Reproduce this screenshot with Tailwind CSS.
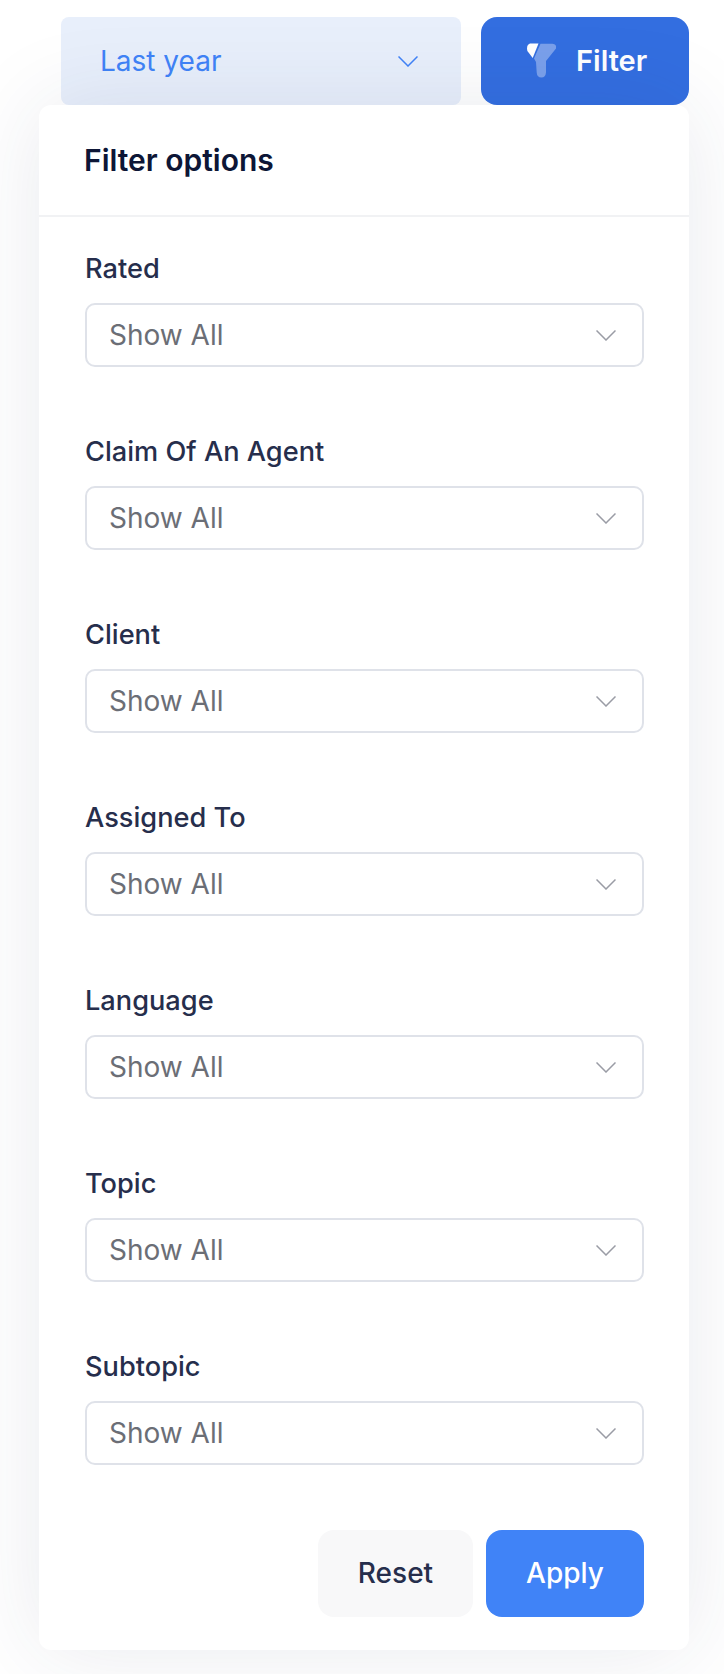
<!DOCTYPE html>
<html lang="en">
<head>
  <meta charset="UTF-8">
  <title>Filter options</title>
  <script src="https://cdn.jsdelivr.net/npm/@tailwindcss/browser@4"></script>
</head>
<body class="bg-white font-['Inter',sans-serif] h-[1674px] overflow-hidden">

  <!-- Top bar -->
  <div class="flex gap-5 pt-[17px] pl-[61px]">
    <div class="w-[400px] h-[88px] rounded-lg bg-[#e8effb] flex items-center justify-between pl-[39px] pr-[43px] text-[#4083f7] text-[28px]">
      <span>Last year</span>
      <svg width="20" height="11" viewBox="0 0 20 11" fill="none" stroke="#4083f7" stroke-width="1.5"><path d="M0.5 0.5 10 10 19.5 0.5"/></svg>
    </div>
    <button class="w-[208px] h-[88px] rounded-2xl bg-[#336ee0] flex items-center pl-[46px] gap-[19px] text-white text-[29px] font-semibold">
      <svg width="30" height="36" viewBox="0 0 30 36">
        <path d="M3 0.5 11.5 0.5 5.7 15 0.4 8Q-1 2 3 0.5Z" fill="#fff"/>
        <path d="M13.5 0.7 25.5 0.7Q29.8 1 29 5.5L19 18 19 29.5Q18.5 34.5 14.5 34.5 10 34.5 9.7 29.5L9 19 7 15.5Z" fill="#fff" fill-opacity="0.35"/>
      </svg>
      <span>Filter</span>
    </button>
  </div>

  <!-- Panel -->
  <div class="relative ml-[39px] w-[650px] h-[1545px] bg-white rounded-xl shadow-[0_0_90px_rgba(40,50,90,0.1)] flex flex-col">
    <div class="h-[112px] shrink-0 border-b-2 border-[#f1f2f4] pl-[45px] pt-px flex items-center text-[30px] font-semibold text-[#0d1636]">Filter options</div>

    <div class="flex flex-col gap-[69px] pl-[46px] pr-[45px] pt-9">
      <div>
        <label class="block h-[30px] mb-5 pt-px text-[27.2px] leading-[30px] font-medium text-[#262e4c]">Rated</label>
        <div class="h-16 border-2 border-[#dfe2e9] rounded-[10px] pl-[22px] pr-[26px] flex items-center justify-between text-[28px] text-[#6b6e76]">
          <span>Show All</span>
          <svg width="20" height="11" viewBox="0 0 20 11" fill="none" stroke="#9a9ca5" stroke-width="1.5"><path d="M0.5 0.5 10 10 19.5 0.5"/></svg>
        </div>
      </div>
      <div>
        <label class="block h-[30px] mb-5 pt-px text-[27.2px] leading-[30px] font-medium text-[#262e4c]">Claim Of An Agent</label>
        <div class="h-16 border-2 border-[#dfe2e9] rounded-[10px] pl-[22px] pr-[26px] flex items-center justify-between text-[28px] text-[#6b6e76]">
          <span>Show All</span>
          <svg width="20" height="11" viewBox="0 0 20 11" fill="none" stroke="#9a9ca5" stroke-width="1.5"><path d="M0.5 0.5 10 10 19.5 0.5"/></svg>
        </div>
      </div>
      <div>
        <label class="block h-[30px] mb-5 pt-px text-[27.2px] leading-[30px] font-medium text-[#262e4c]">Client</label>
        <div class="h-16 border-2 border-[#dfe2e9] rounded-[10px] pl-[22px] pr-[26px] flex items-center justify-between text-[28px] text-[#6b6e76]">
          <span>Show All</span>
          <svg width="20" height="11" viewBox="0 0 20 11" fill="none" stroke="#9a9ca5" stroke-width="1.5"><path d="M0.5 0.5 10 10 19.5 0.5"/></svg>
        </div>
      </div>
      <div>
        <label class="block h-[30px] mb-5 pt-px text-[27.2px] leading-[30px] font-medium text-[#262e4c]">Assigned To</label>
        <div class="h-16 border-2 border-[#dfe2e9] rounded-[10px] pl-[22px] pr-[26px] flex items-center justify-between text-[28px] text-[#6b6e76]">
          <span>Show All</span>
          <svg width="20" height="11" viewBox="0 0 20 11" fill="none" stroke="#9a9ca5" stroke-width="1.5"><path d="M0.5 0.5 10 10 19.5 0.5"/></svg>
        </div>
      </div>
      <div>
        <label class="block h-[30px] mb-5 pt-px text-[27.2px] leading-[30px] font-medium text-[#262e4c]">Language</label>
        <div class="h-16 border-2 border-[#dfe2e9] rounded-[10px] pl-[22px] pr-[26px] flex items-center justify-between text-[28px] text-[#6b6e76]">
          <span>Show All</span>
          <svg width="20" height="11" viewBox="0 0 20 11" fill="none" stroke="#9a9ca5" stroke-width="1.5"><path d="M0.5 0.5 10 10 19.5 0.5"/></svg>
        </div>
      </div>
      <div>
        <label class="block h-[30px] mb-5 pt-px text-[27.2px] leading-[30px] font-medium text-[#262e4c]">Topic</label>
        <div class="h-16 border-2 border-[#dfe2e9] rounded-[10px] pl-[22px] pr-[26px] flex items-center justify-between text-[28px] text-[#6b6e76]">
          <span>Show All</span>
          <svg width="20" height="11" viewBox="0 0 20 11" fill="none" stroke="#9a9ca5" stroke-width="1.5"><path d="M0.5 0.5 10 10 19.5 0.5"/></svg>
        </div>
      </div>
      <div>
        <label class="block h-[30px] mb-5 pt-px text-[27.2px] leading-[30px] font-medium text-[#262e4c]">Subtopic</label>
        <div class="h-16 border-2 border-[#dfe2e9] rounded-[10px] pl-[22px] pr-[26px] flex items-center justify-between text-[28px] text-[#6b6e76]">
          <span>Show All</span>
          <svg width="20" height="11" viewBox="0 0 20 11" fill="none" stroke="#9a9ca5" stroke-width="1.5"><path d="M0.5 0.5 10 10 19.5 0.5"/></svg>
        </div>
      </div>
    </div>

    <!-- Actions -->
    <div class="flex justify-end gap-[13px] mt-[65px] pr-[45px]">
      <button class="w-[155px] h-[87px] pb-[2px] rounded-2xl bg-[#f8f8f9] text-[28px] font-medium text-[#262e4c]">Reset</button>
      <button class="w-[158px] h-[87px] pb-[2px] rounded-2xl bg-[#4083f7] text-[28px] font-medium text-white">Apply</button>
    </div>
  </div>

</body>
</html>
